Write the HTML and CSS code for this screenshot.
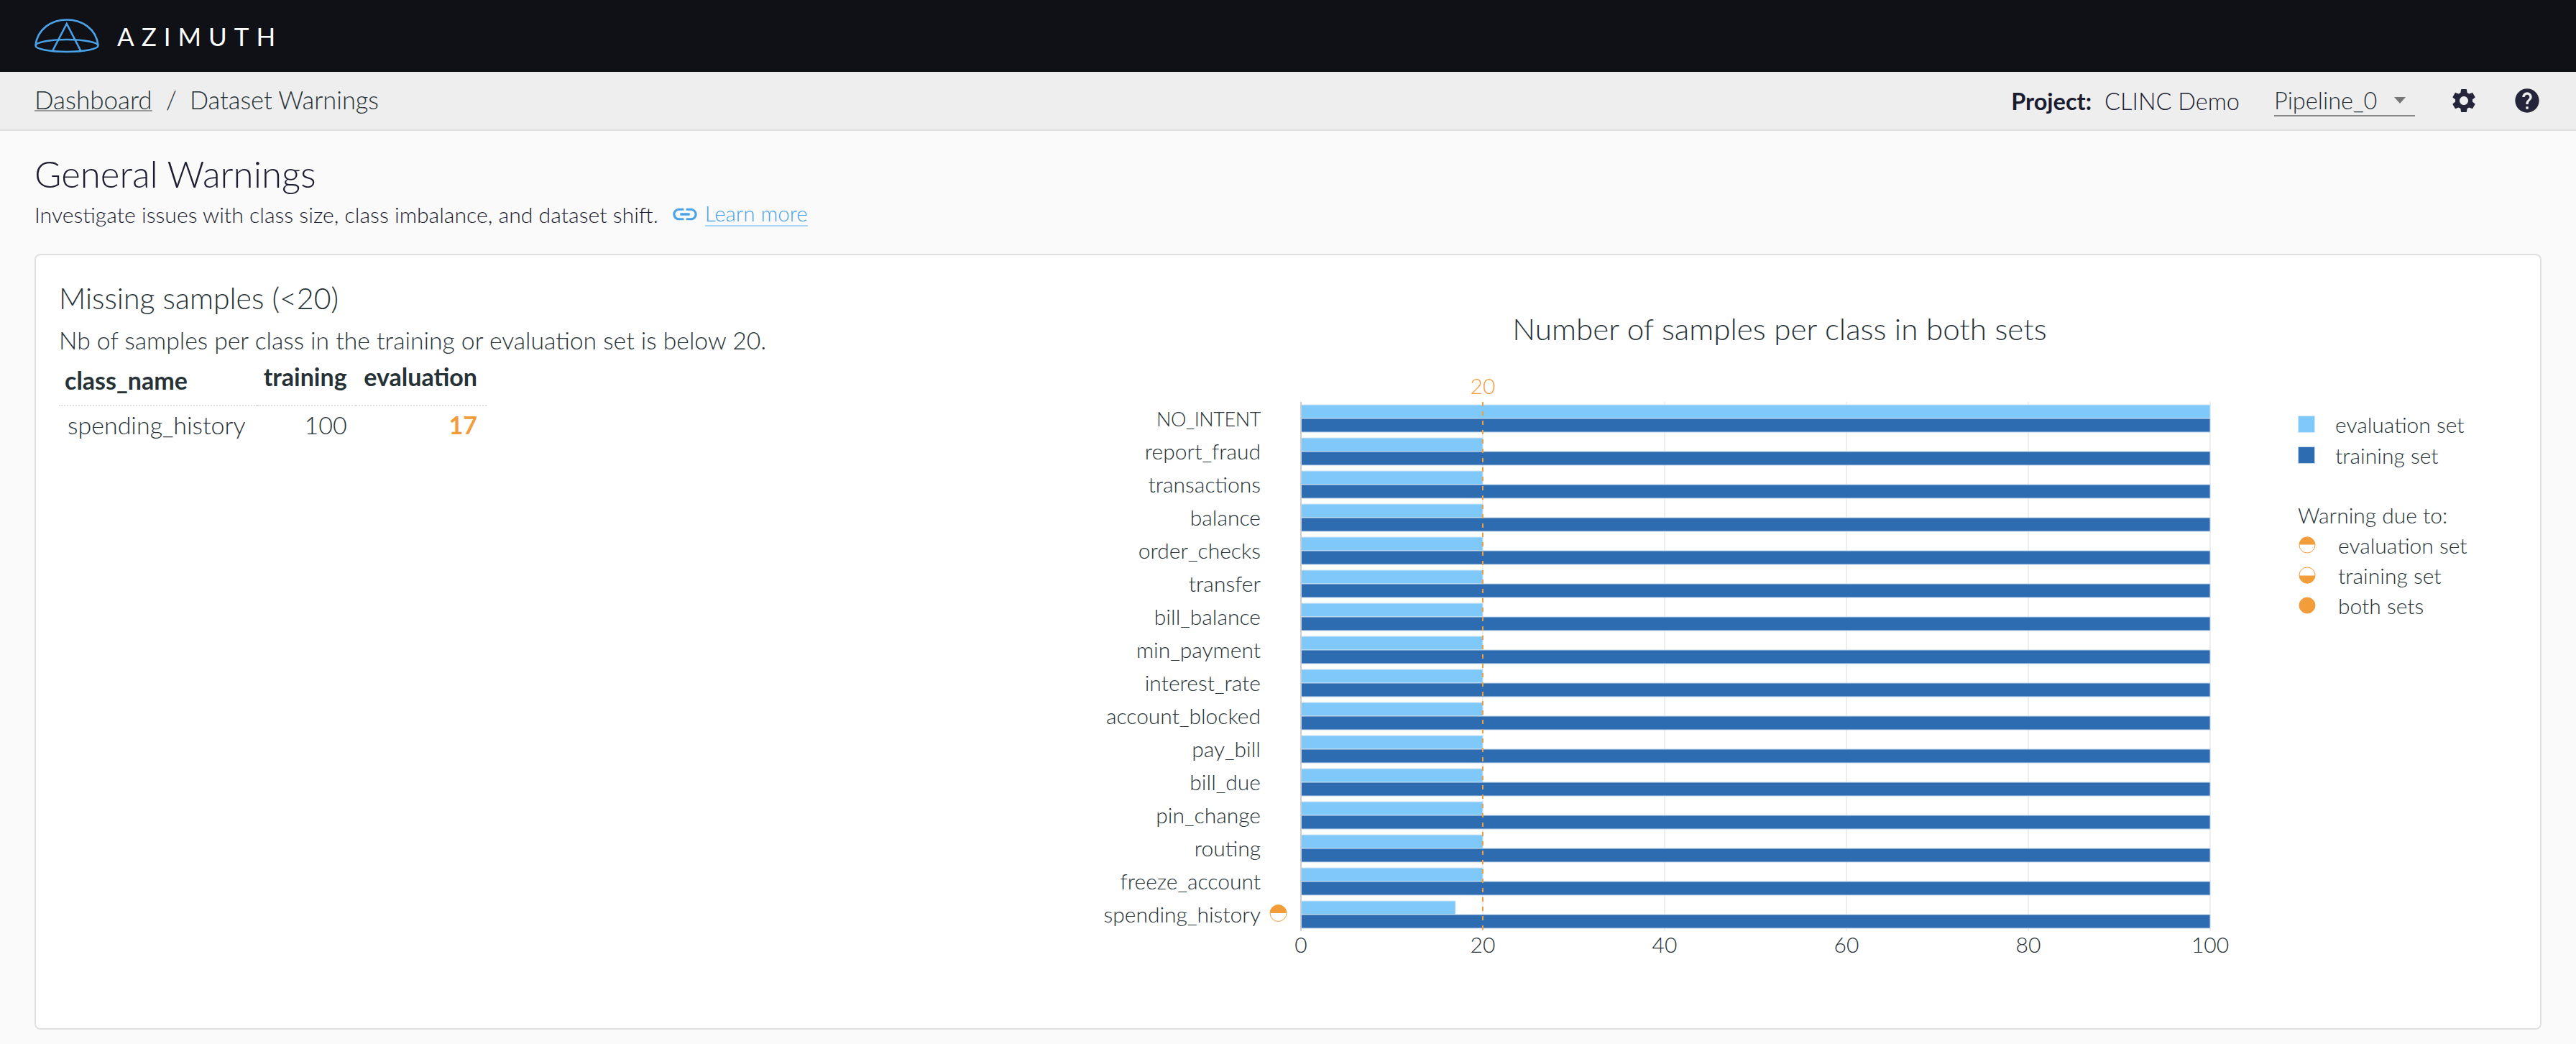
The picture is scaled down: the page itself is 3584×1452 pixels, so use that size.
FILE: index.html
```html
<!DOCTYPE html>
<html lang="en">
<head>
    <meta charset="UTF-8">
    <title>Dataset Warnings</title>
    <link rel="stylesheet" href="styles.css">
</head>
<body>
<header class="topbar">
    <svg class="logo" width="92" height="50" viewBox="47 25 92 50">
        <path d="M49.5 63C52 40 72 27.5 93 27.5S134 40 136.5 63"/>
        <ellipse cx="93" cy="63.5" rx="43.5" ry="8.5"/>
        <path d="M73 71L92.8 33L112.5 71"/>
    </svg>
    <span class="wordmark">AZIMUTH</span>
</header>

<nav class="crumbs">
    <div class="crumb-left">
        <a class="crumb-link">Dashboard</a>
        <span class="crumb-sep">/</span>
        <span class="crumb-page">Dataset Warnings</span>
    </div>
    <div class="crumb-right">
        <div class="project"><b>Project:</b><span>CLINC Demo</span></div>
        <div class="pipeline"><span>Pipeline_0</span><i class="caret"></i></div>
        <svg class="tool" width="40" height="40" viewBox="0 0 24 24"><path d="M19.14 12.94c.04-.3.06-.61.06-.94 0-.32-.02-.64-.07-.94l2.03-1.58c.18-.14.23-.41.12-.61l-1.92-3.32c-.12-.22-.37-.29-.59-.22l-2.39.96c-.5-.38-1.03-.7-1.62-.94l-.36-2.54c-.04-.24-.24-.41-.48-.41h-3.84c-.24 0-.43.17-.47.41l-.36 2.54c-.59.24-1.13.57-1.62.94l-2.39-.96c-.22-.08-.47 0-.59.22L2.74 8.87c-.12.21-.08.47.12.61l2.03 1.58c-.05.3-.09.63-.09.94s.02.64.07.94l-2.03 1.58c-.18.14-.23.41-.12.61l1.92 3.32c.12.22.37.29.59.22l2.39-.96c.5.38 1.03.7 1.62.94l.36 2.54c.05.24.24.41.48.41h3.84c.24 0 .44-.17.47-.41l.36-2.54c.59-.24 1.13-.56 1.62-.94l2.39.96c.22.08.47 0 .59-.22l1.92-3.32c.12-.22.07-.47-.12-.61l-2.01-1.58zM12 15.6c-1.98 0-3.6-1.62-3.6-3.6s1.62-3.6 3.6-3.6 3.6 1.62 3.6 3.6-1.62 3.6-3.6 3.6z"/></svg>
        <svg class="tool" width="40" height="40" viewBox="0 0 24 24"><path d="M12 2C6.48 2 2 6.48 2 12s4.48 10 10 10 10-4.48 10-10S17.52 2 12 2zm1 17h-2v-2h2v2zm2.07-7.75l-.9.92C13.45 12.9 13 13.5 13 15h-2v-.5c0-1.1.45-2.1 1.17-2.83l1.24-1.26c.37-.36.59-.86.59-1.41 0-1.1-.9-2-2-2s-2 .9-2 2H8c0-2.21 1.79-4 4-4s4 1.79 4 4c0 .88-.36 1.68-.93 2.25z"/></svg>
    </div>
</nav>

<main class="page">
    <h1>General Warnings</h1>
    <p class="intro">
        <span>Investigate issues with class size, class imbalance, and dataset shift.</span>
        <svg class="link-icon" width="40" height="40" viewBox="0 0 24 24"><path d="M3.9 12c0-1.71 1.39-3.1 3.1-3.1h4V7H7c-2.76 0-5 2.24-5 5s2.24 5 5 5h4v-1.9H7c-1.71 0-3.1-1.39-3.1-3.1zM8 13h8v-2H8v2zm9-6h-4v1.9h4c1.71 0 3.1 1.39 3.1 3.1s-1.39 3.1-3.1 3.1h-4V17h4c2.76 0 5-2.24 5-5s-2.24-5-5-5z"/></svg>
        <a class="learn">Learn more</a>
    </p>

    <section class="card">
        <div class="samples">
            <h2>Missing samples (&lt;20)</h2>
            <p class="note">Nb of samples per class in the training or evaluation set is below 20.</p>
            <table>
                <tr>
                    <th class="col-name">class_name</th>
                    <th class="col-num raised">training</th>
                    <th class="col-num raised last">evaluation</th>
                </tr>
                <tr>
                    <td class="cell-name">spending_history</td>
                    <td class="col-num">100</td>
                    <td class="col-num last warn">17</td>
                </tr>
            </table>
        </div>

        <!-- chart: 1 data unit = 12.65px, axis starts at x=1810 -->
        <svg class="chart" width="1680" height="920" viewBox="1500 420 1680 920">
            <text class="chart-title" x="2476" y="473">Number of samples per class in both sets</text>

            <g class="grid">
                <path d="M2063 559V1295M2316 559V1295M2569 559V1295M2822 559V1295M3075 559V1295"/>
            </g>

            <g class="bar-eval">
                <rect x="1810" y="563" width="1265" height="19"/>
                <rect x="1810" y="609" width="253" height="19"/>
                <rect x="1810" y="655" width="253" height="19"/>
                <rect x="1810" y="701" width="253" height="19"/>
                <rect x="1810" y="747" width="253" height="19"/>
                <rect x="1810" y="793" width="253" height="19"/>
                <rect x="1810" y="839" width="253" height="19"/>
                <rect x="1810" y="885" width="253" height="19"/>
                <rect x="1810" y="931" width="253" height="19"/>
                <rect x="1810" y="977" width="253" height="19"/>
                <rect x="1810" y="1023" width="253" height="19"/>
                <rect x="1810" y="1069" width="253" height="19"/>
                <rect x="1810" y="1115" width="253" height="19"/>
                <rect x="1810" y="1161" width="253" height="19"/>
                <rect x="1810" y="1207" width="253" height="19"/>
                <rect x="1810" y="1253" width="215" height="19"/>
            </g>
            <g class="bar-train">
                <rect x="1810" y="582" width="1265" height="19"/>
                <rect x="1810" y="628" width="1265" height="19"/>
                <rect x="1810" y="674" width="1265" height="19"/>
                <rect x="1810" y="720" width="1265" height="19"/>
                <rect x="1810" y="766" width="1265" height="19"/>
                <rect x="1810" y="812" width="1265" height="19"/>
                <rect x="1810" y="858" width="1265" height="19"/>
                <rect x="1810" y="904" width="1265" height="19"/>
                <rect x="1810" y="950" width="1265" height="19"/>
                <rect x="1810" y="996" width="1265" height="19"/>
                <rect x="1810" y="1042" width="1265" height="19"/>
                <rect x="1810" y="1088" width="1265" height="19"/>
                <rect x="1810" y="1134" width="1265" height="19"/>
                <rect x="1810" y="1180" width="1265" height="19"/>
                <rect x="1810" y="1226" width="1265" height="19"/>
                <rect x="1810" y="1272" width="1265" height="19"/>
            </g>

            <path class="axis-zero" d="M1810 559V1295"/>
            <path class="threshold" d="M2063 559V1295"/>
            <text class="threshold-label" x="2063" y="548">20</text>

            <g class="cats">
                <text class="cat-caps" x="1754" y="593">NO_INTENT</text>
                <text x="1754" y="639">report_fraud</text>
                <text x="1754" y="685">transactions</text>
                <text x="1754" y="731">balance</text>
                <text x="1754" y="777">order_checks</text>
                <text x="1754" y="823">transfer</text>
                <text x="1754" y="869">bill_balance</text>
                <text x="1754" y="915">min_payment</text>
                <text x="1754" y="961">interest_rate</text>
                <text x="1754" y="1007">account_blocked</text>
                <text x="1754" y="1053">pay_bill</text>
                <text x="1754" y="1099">bill_due</text>
                <text x="1754" y="1145">pin_change</text>
                <text x="1754" y="1191">routing</text>
                <text x="1754" y="1237">freeze_account</text>
                <text x="1754" y="1283">spending_history</text>
            </g>

            <g class="ticks">
                <text x="1810" y="1325">0</text>
                <text x="2063" y="1325">20</text>
                <text x="2316" y="1325">40</text>
                <text x="2569" y="1325">60</text>
                <text x="2822" y="1325">80</text>
                <text x="3075" y="1325">100</text>
            </g>

            <g class="dot">
                <circle cx="1778.5" cy="1270" r="11.5"/>
                <path d="M1767 1270a11.5 11.5 0 0 1 23 0z"/>
            </g>
        </svg>

        <div class="legend">
            <div class="legend-row"><i class="swatch swatch-eval"></i>evaluation set</div>
            <div class="legend-row"><i class="swatch swatch-train"></i>training set</div>
            <div class="legend-head">Warning due to:</div>
            <div class="legend-row warn-row">
                <svg class="dot" width="24" height="24" viewBox="0 0 24 24"><circle cx="12" cy="12" r="11"/><path d="M1 11.5a11 11 0 0 1 22 0z"/></svg>
                evaluation set
            </div>
            <div class="legend-row warn-row">
                <svg class="dot" width="24" height="24" viewBox="0 0 24 24"><circle cx="12" cy="12" r="11"/><path d="M1 12.5a11 11 0 0 0 22 0z"/></svg>
                training set
            </div>
            <div class="legend-row warn-row">
                <svg class="dot" width="24" height="24" viewBox="0 0 24 24"><circle class="full" cx="12" cy="12" r="11"/></svg>
                both sets
            </div>
        </div>
    </section>
</main>
</body>
</html>
```

FILE: styles.css
```css
*{margin:0;padding:0;box-sizing:border-box;}
html,body{height:100%;}
body{background:#fafafa;color:#263236;font-family:"Lato","Liberation Sans",sans-serif;font-weight:300;font-size:34px;}

/* top bar */
.topbar{height:100px;background:#0f1117;display:flex;align-items:center;padding-left:47px;}
.logo{display:block;}
.logo path,.logo ellipse{fill:none;stroke:#4aa3e8;stroke-width:2.6;}
.wordmark{margin-left:24px;color:#fff;font-size:35px;font-weight:400;letter-spacing:10px;}

/* breadcrumb */
.crumbs{height:82px;background:#eee;border-bottom:2px solid #e0e0e0;display:flex;align-items:center;padding:0 48px;}
.crumb-left{display:flex;align-items:baseline;font-size:35px;margin-bottom:4px;}
.crumb-link{border-bottom:2px solid #999;line-height:30px;}
.crumb-sep{margin:0 18px 0 19px;}
.crumb-page{font-size:34.4px;}
.crumb-right{margin-left:auto;display:flex;align-items:center;gap:48px;font-size:32.5px;}
.project{display:flex;gap:18px;color:#1c1c30;}
.project b{font-weight:700;}
.pipeline{width:196px;height:44px;border-bottom:2px solid #888;display:flex;align-items:center;justify-content:space-between;padding-right:13px;}
.caret{width:0;height:0;border-left:8px solid transparent;border-right:8px solid transparent;border-top:9px solid #777;}
.tool{display:block;fill:#24243a;}

/* page head */
.page{padding:0 48px;}
h1{font-size:51px;font-weight:300;color:#1c1c30;line-height:60px;padding-top:30px;}
.intro{display:flex;align-items:center;height:40px;margin-top:6px;color:#1c1c30;font-size:30.2px;}
.link-icon{fill:#4aa3e8;margin-left:17px;}
.learn{color:#4aa3e8;border-bottom:2px solid #a8d4f5;margin-left:8px;line-height:32px;font-size:29.5px;}

/* card */
.card{height:1079px;margin-top:35px;background:#fff;border:2px solid #e0e0e0;border-radius:8px;display:flex;align-items:flex-start;}
.samples{width:1450px;padding:36px 0 0 32px;}
h2{font-size:41px;font-weight:300;line-height:48px;}
.note{line-height:40px;margin-top:14px;font-size:33.7px;}

table{border-collapse:collapse;margin-top:0;width:595px;}
th{font-weight:700;font-size:34px;height:71px;border-bottom:2px dotted #ddd;}
td{height:52px;}
.col-name{width:276px;text-align:left;padding-left:8px;}
.cell-name{padding-left:12px;}
.col-num{text-align:right;padding-right:12px;}
.raised{vertical-align:top;padding-top:10px;}
.last{padding-right:13px;}
.warn{color:#f39c3a;font-weight:700;}

/* chart */
.chart{display:block;margin-top:65px;}
.chart text{fill:#263236;}
.chart-title{font-size:42.2px;text-anchor:middle;}
.grid path{fill:none;stroke:#eee;stroke-width:2;}
.bar-eval rect{fill:#7ec9fa;stroke:#d5e8f7;stroke-width:1;}
.bar-train rect{fill:#2d6cb0;stroke:#c5d8ea;stroke-width:1;}
.axis-zero{stroke:#ccc;stroke-width:2;}
.threshold{stroke:#f39c3a;stroke-width:2;stroke-dasharray:6 7;}
.chart .threshold-label{fill:#f39c3a;font-size:30px;text-anchor:middle;}
.cats text{font-size:30px;text-anchor:end;}
.cats .cat-caps{font-size:27px;letter-spacing:-.4px;}
.ticks text{font-size:30px;text-anchor:middle;}
.dot circle{fill:#fff;stroke:#f39c3a;stroke-width:1;}
.dot path{fill:#f39c3a;}
.dot .full{fill:#f39c3a;}

/* legend */
.legend{margin:213px 0 0 17px;font-size:30px;}
.legend-row{display:flex;align-items:center;height:43px;}
.swatch{width:24px;height:24px;margin-right:28px;}
.swatch-eval{background:#7ec9fa;border:1px solid #d5e8f7;}
.swatch-train{background:#2d6cb0;border:1px solid #c5d8ea;}
.legend-head{margin-top:41px;line-height:42px;}
.warn-row{height:42px;}
.warn-row .dot{margin:0 31px 0 1px;}
```
